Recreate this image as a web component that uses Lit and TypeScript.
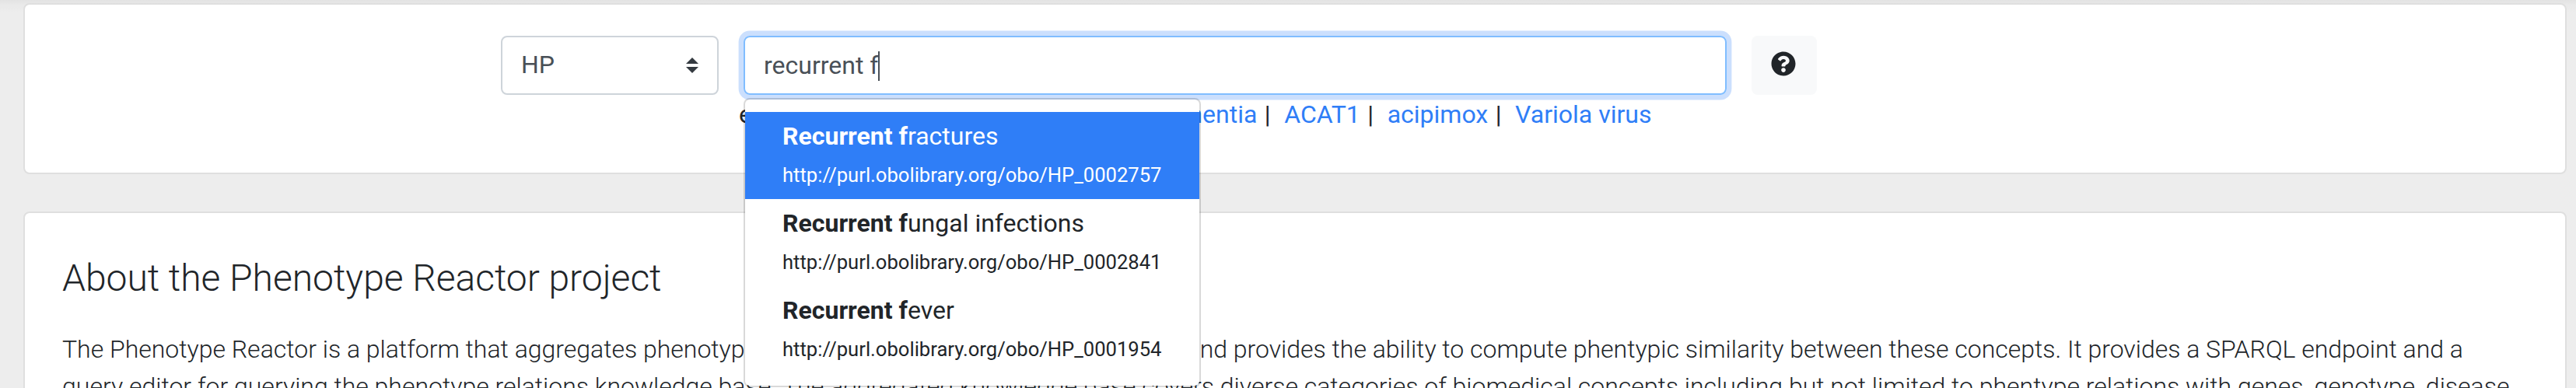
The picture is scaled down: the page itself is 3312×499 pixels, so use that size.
import { LitElement, html, css } from "lit";
import { customElement, state } from "lit/decorators.js";

interface Suggestion { match: string; rest: string; iri: string }

@customElement("app-root")
export class AppRoot extends LitElement {
  static styles = css`
    :host { display: block; height: 499px; overflow: hidden; box-sizing: border-box; padding: 4px 12px 0 30px;
      background: linear-gradient(#e3e3e3, #e9e9e9 6px, #ededed 16px); color: #212529;
      font: 400 32px/48px Roboto, sans-serif; }
    * { box-sizing: border-box; }
    .card { background: #fff; border: 2px solid #dfdfdf; border-radius: 8px; }
    .search { height: 220px; margin-bottom: 48px; padding-top: 40px; }
    .row { display: flex; padding-left: 612px; }
    .select { width: 280px; height: 76px; margin-right: 32px; padding: 0 24px; border: 2px solid #ced4da; border-radius: 8px;
      display: flex; align-items: center; justify-content: space-between; color: #495057; }
    .select span { padding-bottom: 2px; }
    .select svg { width: 16px; height: 20px; }
    .field { position: relative; width: 1264px; margin-right: 32px; }
    .input { height: 76px; padding: 0 24px; border: 2px solid #80bdff; border-radius: 8px; color: #495057;
      box-shadow: 0 0 0 6.4px #cbdffd; display: flex; align-items: center; }
    .caret { width: 2px; height: 38px; margin-top: 2px; background: #495057; }
    .menu { position: absolute; z-index: 2; top: 80px; left: 0; width: 588px; padding: 16px 0; background: #fff;
      background-clip: padding-box; border: 2px solid rgba(0, 0, 0, .15); border-radius: 8px; }
    .item { padding: 7px 48px; white-space: nowrap; }
    .item.active { background: #2f7ef7; color: #fff; }
    .iri { padding-top: 2px; font-size: 25.6px; }
    b { font-weight: 700; }
    .help { width: 84px; height: 76px; padding: 0 2px 4px 0; border-radius: 8px; background: #f8f9fa; display: flex; align-items: center; justify-content: center; }
    .help svg { width: 32px; height: 32px; }
    .examples { display: flex; padding: 1px 0 0 918px; white-space: pre; }
    .lead { width: 530px; }
    .sep { margin: 0 1.8px 0 1.5px; }
    .link { color: #2f7ef7; }
    .about { height: 400px; padding: 55px 48px 0; font-weight: 300; }
    .title { margin: 0 0 38.4px; font-size: 48px; line-height: 57.6px; font-weight: 300; letter-spacing: -.03px; }
    .line { white-space: nowrap; letter-spacing: -.014px; }
    .fill { display: inline-block; width: 568px; height: 48px; vertical-align: top; }
  `;

  @state() private active = 0;

  private suggestions: Suggestion[] = [
    { match: "Recurrent f", rest: "ractures", iri: "http://purl.obolibrary.org/obo/HP_0002757" },
    { match: "Recurrent f", rest: "ungal infections", iri: "http://purl.obolibrary.org/obo/HP_0002841" },
    { match: "Recurrent f", rest: "ever", iri: "http://purl.obolibrary.org/obo/HP_0001954" },
  ];

  render() {
    return html`
      <section class="card search">
        <div class="row">
          <div class="select"><span>HP</span>
            <svg viewBox="0 0 16 20" fill="#343a40"><path d="M0 8L8 0l8 8zM0 12h16l-8 8z"/></svg></div>
          <div class="field">
            <div class="input"><span>recurrent f</span><i class="caret"></i></div>
            <div class="menu">
              ${this.suggestions.map((s, i) => html`
                <div class="item ${i === this.active ? "active" : ""}" @mouseenter=${() => (this.active = i)}>
                  <div><b>${s.match}</b>${s.rest}</div>
                  <div class="iri">${s.iri}</div>
                </div>`)}
            </div>
          </div>
          <div class="help"><svg viewBox="0 0 512 512" fill="#212529"><path d="M504 256c0 136.997-111.043 248-248 248S8 392.997 8 256C8 119.083 119.043 8 256 8s248 111.083 248 248zM262.655 90c-54.497 0-89.255 22.957-116.549 63.758-3.536 5.286-2.353 12.415 2.715 16.258l34.699 26.31c5.205 3.947 12.621 3.008 16.665-2.122 17.864-22.658 30.113-35.797 57.303-35.797 20.429 0 45.698 13.148 45.698 32.958 0 14.976-12.363 22.667-32.534 33.976C247.128 238.528 216 254.941 216 296v4c0 6.627 5.373 12 12 12h56c6.627 0 12-5.373 12-12v-1.333c0-28.462 83.186-29.647 83.186-106.667 0-58.002-60.165-102-116.531-102zM256 338c-25.365 0-46 20.635-46 46 0 25.364 20.635 46 46 46s46-20.636 46-46c0-25.365-20.635-46-46-46z"/></svg></div>
        </div>
        <div class="examples"><span class="lead">e.g. </span><span class="link">Dementia</span><span class="sep"> |  </span><span class="link">ACAT1</span><span class="sep"> |  </span><span class="link">acipimox</span><span class="sep"> |  </span><span class="link">Variola virus</span></div>
      </section>
      <section class="card about">
        <h4 class="title">About the Phenotype Reactor project</h4>
        <div class="line">The Phenotype Reactor is a platform that aggregates phenotyp<span class="fill">e associations</span>and provides the ability to compute phentypic similarity between these concepts. It provides a SPARQL endpoint and a</div>
        <div class="line">query editor for querying the phenotype relations knowledge base. The aggregated knowledge base covers diverse categories of biomedical concepts including but not limited to phentype relations with genes, genotype, disease</div>
      </section>`;
  }
}
